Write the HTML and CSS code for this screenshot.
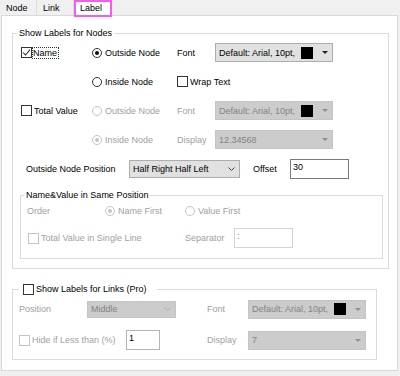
FILE: index.html
```html
<!DOCTYPE html>
<html>
<head>
<meta charset="utf-8">
<link rel="stylesheet" href="styles.css">
</head>
<body>
<div class="tabs">
  <div class="tab">Node</div>
  <div class="tab">Link</div>
  <div class="tab active">Label</div>
</div>
<div class="panel">
  <div class="grp nodes">
    <div class="legend">Show Labels for Nodes</div>
    <div class="nrow">
      <div class="c1"><span class="chk"><svg width="9" height="9" viewBox="0 0 9 9"><path d="M1.2 4.6 L3.6 7 L8 1.6" fill="none" stroke="#333" stroke-width="1.1"/></svg></span><span class="focus">Name</span></div>
      <div class="c2"><span class="rad on"></span><span class="lbl">Outside Node</span></div>
      <div class="c3">Font</div>
      <div class="dd"><span class="dd-text">Default: Arial, 10pt,</span><span class="swatch"></span><span class="tri"></span></div>
    </div>
    <div class="nrow">
      <div class="c1"></div>
      <div class="c2"><span class="rad"></span><span class="lbl">Inside Node</span></div>
      <div class="c3w"><span class="chk"></span><span class="lbl">Wrap Text</span></div>
    </div>
    <div class="nrow">
      <div class="c1"><span class="chk"></span><span class="lbl">Total Value</span></div>
      <div class="c2 dis"><span class="rad"></span><span class="lbl">Outside Node</span></div>
      <div class="c3 dis">Font</div>
      <div class="dd off"><span class="dd-text">Default: Arial, 10pt,</span><span class="swatch"></span><span class="tri"></span></div>
    </div>
    <div class="nrow">
      <div class="c1"></div>
      <div class="c2 dis"><span class="rad on"></span><span class="lbl">Inside Node</span></div>
      <div class="c3 dis">Display</div>
      <div class="dd off"><span class="dd-text">12.34568</span><span class="tri"></span></div>
    </div>
    <div class="nrow">
      <div class="c5">Outside Node Position</div>
      <div class="combo"><span class="dd-text">Half Right Half Left</span><svg class="chev" width="7" height="4" viewBox="0 0 7 4"><path d="M0.5 0.5 L3.5 3.5 L6.5 0.5" fill="none" stroke="#444" stroke-width="1"/></svg></div>
      <div class="offset">Offset</div>
      <div class="tbox w59">30</div>
    </div>
    <div class="grp inner">
      <div class="legend">Name&amp;Value in Same Position</div>
      <div class="irow">
        <div class="i1 dis">Order</div>
        <div class="i2 dis"><span class="rad on"></span><span class="lbl">Name First</span></div>
        <div class="i3 dis"><span class="rad"></span><span class="lbl">Value First</span></div>
      </div>
      <div class="irow r2">
        <div class="ib1 dis"><span class="chk"></span><span class="lbl">Total Value in Single Line</span></div>
        <div class="ib2 dis">Separator</div>
        <div class="tbox w59 light">:</div>
      </div>
    </div>
  </div>
  <div class="grp links">
    <div class="legend lk"><span class="chk"></span><span class="lbl">Show Labels for Links (Pro)</span></div>
    <div class="lrow">
      <div class="l1 dis">Position</div>
      <div class="combo off mid"><span class="dd-text">Middle</span><svg class="chev" width="7" height="4" viewBox="0 0 7 4"><path d="M0.5 0.5 L3.5 3.5 L6.5 0.5" fill="none" stroke="#aaa" stroke-width="1"/></svg></div>
      <div class="l3 dis">Font</div>
      <div class="dd off"><span class="dd-text">Default: Arial, 10pt,</span><span class="swatch"></span><span class="tri"></span></div>
    </div>
    <div class="lrow r2">
      <div class="lb1 dis"><span class="chk"></span><span class="lbl">Hide if Less than (%)</span></div>
      <div class="tbox w34 mid">1</div>
      <div class="lb3 dis">Display</div>
      <div class="dd off"><span class="dd-text">7</span><span class="tri"></span></div>
    </div>
  </div>
</div>
</body>
</html>
```
FILE: styles.css
```css
* { box-sizing: border-box; }
html, body { margin: 0; padding: 0; }
body {
  width: 400px;
  height: 376px;
  overflow: hidden;
  background: #f0f0f0;
  font-family: "Liberation Sans", Arial, sans-serif;
  font-size: 9px;
  color: #000;
}
.tabs { display: flex; height: 15px; }
.tab {
  width: 37px;
  padding-left: 6px;
  padding-top: 1px;
  line-height: 15px;
  border-right: 1px solid #dcdcdc;
}
.tab.active {
  position: relative;
  z-index: 1;
  width: 38px;
  height: 17px;
  padding-left: 4px;
  padding-top: 0;
  line-height: 12px;
  background: #fff;
  border: 2px solid #f25cf2;
}
.panel {
  margin-left: 1px;
  width: 397px;
  background: #fff;
  border: 1px solid #d9d9d9;
  padding: 0 0 10px 10px;
}
.grp { border: 1px solid #dcdcdc; }
.legend {
  background: #fff;
  width: max-content;
  height: 14px;
  line-height: 14px;
  margin: -8px 0 -2px -3px;
  padding: 0 2px;
}
.nodes { margin-top: 17px; width: 377px; padding: 0 5px 9px 7px; }
.nrow { display: flex; align-items: center; height: 29px; }
.c1, .c2, .c3w, .i2, .i3, .ib1, .lb1 { display: flex; align-items: center; }
.c1 { width: 72px; }
.c1 .chk { margin-left: 1px; }
.c2 { width: 85px; }
.c3 { width: 38px; }
.c3w { width: 100px; }
.c5 { width: 109px; padding-left: 6px; }
.offset { width: 37px; margin-left: 13px; }
.lbl { margin-left: 2px; }
.c2 .lbl { margin-left: 3px; }
.dis { color: #a0a0a0; }

.chk {
  width: 11px;
  height: 11px;
  border: 1px solid #333;
  background: #fff;
  display: flex;
  align-items: center;
  justify-content: center;
  flex: none;
}
.dis .chk { border-color: #c4c4c4; }
.rad {
  width: 10px;
  height: 10px;
  border: 1px solid #333;
  border-radius: 50%;
  background: #fff;
  display: flex;
  align-items: center;
  justify-content: center;
  flex: none;
}
.rad.on::after {
  content: "";
  width: 4px;
  height: 4px;
  border-radius: 50%;
  background: #111;
}
.dis .rad { border-color: #c4c4c4; }
.dis .rad.on::after { background: #c4c4c4; }
.focus {
  border: 1px dotted #333;
  height: 12px;
  line-height: 10px;
  padding: 0 1px 0 0;
}

.dd {
  width: 118px;
  height: 19px;
  display: flex;
  align-items: center;
  background: #e1e1e1;
  border: 1px solid #adadad;
  padding: 0 4px 0 3px;
}
.dd.off { background: #cccccc; border-color: #c4c4c4; color: #838383; }
.dd-text { flex: 1; white-space: nowrap; }
.swatch { width: 12px; height: 12px; background: #000; flex: none; }
.tri {
  width: 0;
  height: 0;
  margin-left: 9px;
  border-left: 3px solid transparent;
  border-right: 3px solid transparent;
  border-top: 3px solid #222;
  flex: none;
}
.dd.off .tri { border-top-color: #8f8f8f; }
.combo {
  width: 111px;
  height: 18px;
  display: flex;
  align-items: center;
  background: #e1e1e1;
  border: 1px solid #adadad;
  padding: 0 4px 0 3px;
}
.combo.off { background: #cccccc; border-color: #c4c4c4; color: #838383; }
.combo.mid { width: 89px; height: 17px; }
.chev { flex: none; }
.tbox {
  height: 20px;
  border: 1px solid #7a7a7a;
  background: #fff;
  padding: 2px 0 0 2px;
  line-height: 11px;
}
.tbox.w59 { width: 59px; }
.tbox.w34 { width: 34px; }
.tbox.light { border-color: #d4d4d4; color: #808080; }
.tbox.mid { border-color: #b4b4b4; }

.inner { margin-top: 12px; width: 363px; padding: 0 0 7px 6px; }
.inner .legend { margin-bottom: -4px; }
.irow { display: flex; align-items: center; height: 26px; }
.irow.r2 { margin-top: 1px; }
.i1 { width: 78px; }
.i2 { width: 80px; }
.i3 .lbl, .i2 .lbl { margin-left: 3px; }
.ib1 { width: 158px; }
.ib1 .chk { margin-left: 1px; }
.ib2 { width: 49px; }

.links { margin-top: 20px; width: 365px; padding: 0 0 8px 6px; }
.legend.lk {
  display: flex;
  align-items: center;
  margin: -8px 0 2px 0;
  padding: 0 10px 0 4px;
}
.lrow { display: flex; align-items: center; height: 22px; }
.lrow.r2 { margin-top: 9px; }
.l1 { width: 68px; }
.l3 { width: 41px; margin-left: 31px; }
.lb1 { width: 107px; }
.lb3 { width: 41px; margin-left: 47px; }
```
